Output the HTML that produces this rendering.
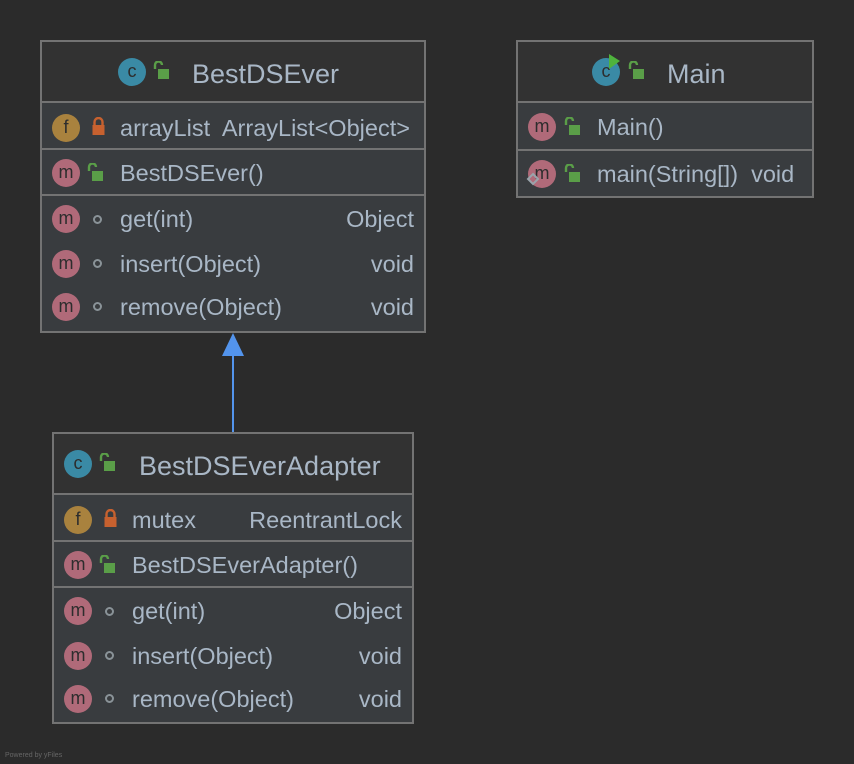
<!DOCTYPE html>
<html><head><meta charset="utf-8"><style>
body{margin:0;width:854px;height:764px;background:#2b2b2b;position:relative;overflow:hidden;font-family:"Liberation Sans",sans-serif;color:#a9b7c6}
.box{position:absolute;border:2px solid #737373;background:#393c3f;box-sizing:border-box}
.hd{position:absolute;left:0;right:0;top:0;height:59px;background:#323232;border-bottom:2px solid #737373;box-sizing:content-box}
.sep{position:absolute;left:0;right:0;height:2px;background:#737373}
.t{position:absolute;font-size:23.5px;line-height:26px;white-space:nowrap}
.r{position:absolute;font-size:23.5px;line-height:26px;white-space:nowrap;text-align:right}
.ttl{position:absolute;font-size:27px;line-height:30px;white-space:nowrap}
.ic{position:absolute;width:28px;height:28px;border-radius:50%;text-align:center;font-size:18px;line-height:27px;color:#2d2d2d}
.m{background:#b06a79}.f{background:#a9823e}.c{background:#3a8aa5}
svg{position:absolute}
.dot{position:absolute;width:5px;height:5px;border:2px solid #8a9398;border-radius:50%}
</style></head><body>
<svg width="0" height="0" style="position:absolute"><defs>
<g id="ol"><path d="M2 8 V4 a3.5 3.5 0 0 1 7 0" stroke="#5a9e48" stroke-width="2.4" fill="none"/><rect x="5" y="8" width="11" height="10" fill="#5a9e48"/></g>
<g id="cl"><path d="M3.5 8 V5 a4 4 0 0 1 8 0 V8" stroke="#c7612f" stroke-width="2.4" fill="none"/><rect x="1.5" y="8" width="12" height="10" fill="#c7612f"/></g>
</defs></svg>

<!-- Box 1 -->
<div class="box" style="left:40px;top:40px;width:386px;height:293px">
 <div class="hd"></div>
 <div class="sep" style="top:106px"></div>
 <div class="sep" style="top:152px"></div>
</div>
<div class="ic c" style="left:118px;top:58px">c</div>
<svg style="left:153px;top:61px" width="18" height="19"><use href="#ol"/></svg>
<div class="ttl" style="left:192px;top:59px">BestDSEver</div>
<div class="ic f" style="left:52px;top:114px">f</div>
<svg style="left:91px;top:117px" width="16" height="19"><use href="#cl"/></svg>
<div class="t" style="left:120px;top:115px">arrayList&nbsp; ArrayList&lt;Object&gt;</div>
<div class="ic m" style="left:52px;top:159px">m</div>
<svg style="left:87px;top:163px" width="18" height="19"><use href="#ol"/></svg>
<div class="t" style="left:120px;top:160px">BestDSEver()</div>
<div class="ic m" style="left:52px;top:205px">m</div><div class="dot" style="left:93px;top:215px"></div>
<div class="t" style="left:120px;top:206px">get(int)</div><div class="r" style="right:440px;top:206px">Object</div>
<div class="ic m" style="left:52px;top:250px">m</div><div class="dot" style="left:93px;top:259px"></div>
<div class="t" style="left:120px;top:251px">insert(Object)</div><div class="r" style="right:440px;top:251px">void</div>
<div class="ic m" style="left:52px;top:293px">m</div><div class="dot" style="left:93px;top:302px"></div>
<div class="t" style="left:120px;top:294px">remove(Object)</div><div class="r" style="right:440px;top:294px">void</div>

<!-- Box 2 -->
<div class="box" style="left:516px;top:40px;width:298px;height:158px">
 <div class="hd"></div>
 <div class="sep" style="top:107px"></div>
</div>
<div class="ic c" style="left:592px;top:58px">c</div>
<svg style="left:607px;top:53px" width="14" height="17"><path d="M2 1 L13 8 L2 16 Z" fill="#4fb33d"/></svg>
<svg style="left:628px;top:61px" width="18" height="19"><use href="#ol"/></svg>
<div class="ttl" style="left:667px;top:59px">Main</div>
<div class="ic m" style="left:528px;top:113px">m</div>
<svg style="left:564px;top:117px" width="18" height="19"><use href="#ol"/></svg>
<div class="t" style="left:597px;top:114px">Main()</div>
<div class="ic m" style="left:528px;top:160px">m</div>
<svg style="left:526px;top:172px" width="14" height="14"><path d="M7 2 L12 7 L7 12 L2 7 Z" fill="none" stroke="#9aa4ab" stroke-width="2"/></svg>
<svg style="left:564px;top:164px" width="18" height="19"><use href="#ol"/></svg>
<div class="t" style="left:597px;top:161px">main(String[])&nbsp; void</div>

<!-- Arrow -->
<div style="position:absolute;left:232px;top:354px;width:2px;height:79px;background:#5394ec"></div>
<svg style="left:221px;top:332px" width="24" height="25"><path d="M12 1 L23 24 L1 24 Z" fill="#5394ec"/></svg>

<!-- Box 3 -->
<div class="box" style="left:52px;top:432px;width:362px;height:292px">
 <div class="hd"></div>
 <div class="sep" style="top:106px"></div>
 <div class="sep" style="top:152px"></div>
</div>
<div class="ic c" style="left:64px;top:450px">c</div>
<svg style="left:99px;top:453px" width="18" height="19"><use href="#ol"/></svg>
<div class="ttl" style="left:139px;top:451px">BestDSEverAdapter</div>
<div class="ic f" style="left:64px;top:506px">f</div>
<svg style="left:103px;top:509px" width="16" height="19"><use href="#cl"/></svg>
<div class="t" style="left:132px;top:507px">mutex</div><div class="r" style="right:452px;top:507px">ReentrantLock</div>
<div class="ic m" style="left:64px;top:551px">m</div>
<svg style="left:99px;top:555px" width="18" height="19"><use href="#ol"/></svg>
<div class="t" style="left:132px;top:552px">BestDSEverAdapter()</div>
<div class="ic m" style="left:64px;top:597px">m</div><div class="dot" style="left:105px;top:607px"></div>
<div class="t" style="left:132px;top:598px">get(int)</div><div class="r" style="right:452px;top:598px">Object</div>
<div class="ic m" style="left:64px;top:642px">m</div><div class="dot" style="left:105px;top:651px"></div>
<div class="t" style="left:132px;top:643px">insert(Object)</div><div class="r" style="right:452px;top:643px">void</div>
<div class="ic m" style="left:64px;top:685px">m</div><div class="dot" style="left:105px;top:694px"></div>
<div class="t" style="left:132px;top:686px">remove(Object)</div><div class="r" style="right:452px;top:686px">void</div>

<div style="position:absolute;left:5px;top:752px;font-size:7px;color:#666">Powered by yFiles</div>
</body></html>
